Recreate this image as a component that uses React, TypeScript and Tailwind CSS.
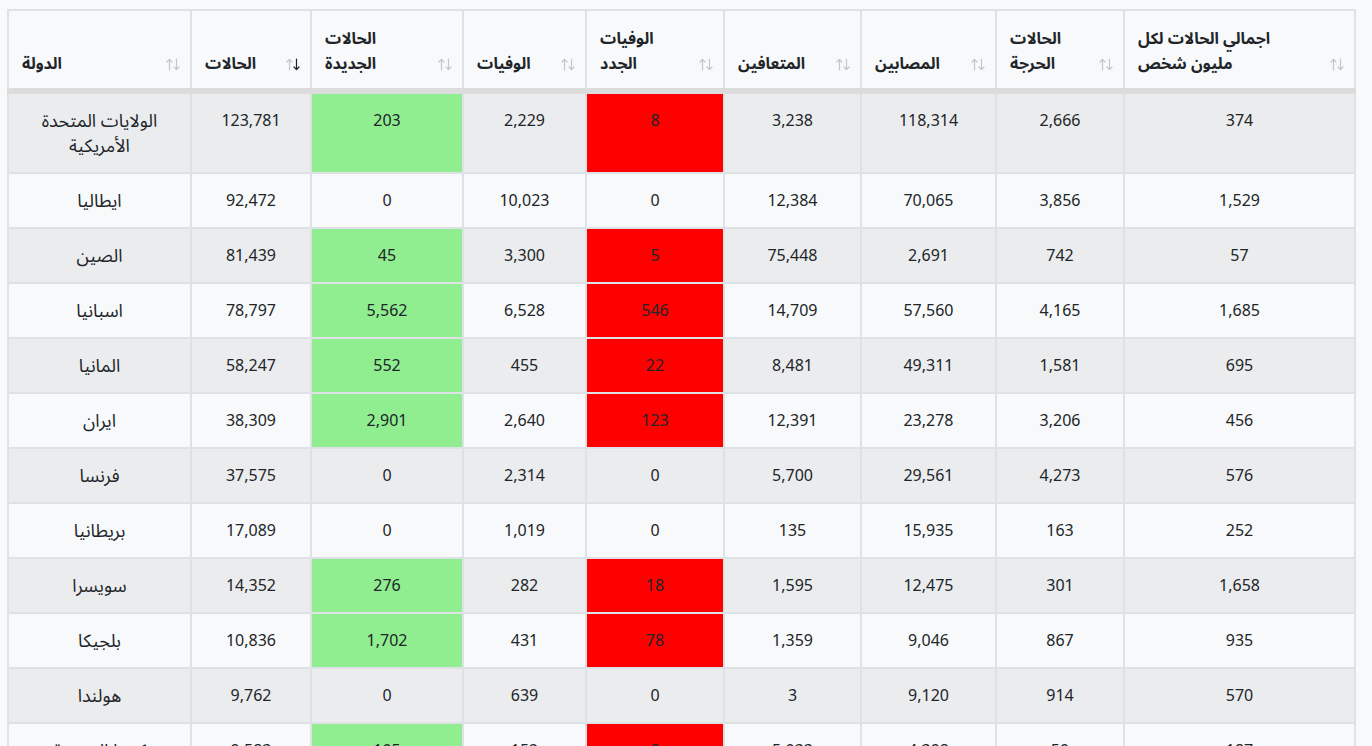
import React from 'react';

type Row = {
  country: string[];
  cases: string;
  newCases: string;
  deaths: string;
  newDeaths: string;
  recovered: string;
  active: string;
  critical: string;
  perMillion: string;
};

const headers: { lines: string[]; sorted?: boolean }[] = [
  { lines: ['الدولة'] },
  { lines: ['الحالات'], sorted: true },
  { lines: ['الحالات', 'الجديدة'] },
  { lines: ['الوفيات'] },
  { lines: ['الوفيات', 'الجدد'] },
  { lines: ['المتعافين'] },
  { lines: ['المصابين'] },
  { lines: ['الحالات', 'الحرجة'] },
  { lines: ['اجمالي الحالات لكل', 'مليون شخص'] },
];

const widths = [183, 120, 152, 123, 138, 137, 135, 128, 231];

const rows: Row[] = [
  { country: ['الولايات المتحدة', 'الأمريكية'], cases: '123,781', newCases: '203', deaths: '2,229', newDeaths: '8', recovered: '3,238', active: '118,314', critical: '2,666', perMillion: '374' },
  { country: ['ايطاليا'], cases: '92,472', newCases: '0', deaths: '10,023', newDeaths: '0', recovered: '12,384', active: '70,065', critical: '3,856', perMillion: '1,529' },
  { country: ['الصين'], cases: '81,439', newCases: '45', deaths: '3,300', newDeaths: '5', recovered: '75,448', active: '2,691', critical: '742', perMillion: '57' },
  { country: ['اسبانيا'], cases: '78,797', newCases: '5,562', deaths: '6,528', newDeaths: '546', recovered: '14,709', active: '57,560', critical: '4,165', perMillion: '1,685' },
  { country: ['المانيا'], cases: '58,247', newCases: '552', deaths: '455', newDeaths: '22', recovered: '8,481', active: '49,311', critical: '1,581', perMillion: '695' },
  { country: ['ايران'], cases: '38,309', newCases: '2,901', deaths: '2,640', newDeaths: '123', recovered: '12,391', active: '23,278', critical: '3,206', perMillion: '456' },
  { country: ['فرنسا'], cases: '37,575', newCases: '0', deaths: '2,314', newDeaths: '0', recovered: '5,700', active: '29,561', critical: '4,273', perMillion: '576' },
  { country: ['بريطانيا'], cases: '17,089', newCases: '0', deaths: '1,019', newDeaths: '0', recovered: '135', active: '15,935', critical: '163', perMillion: '252' },
  { country: ['سويسرا'], cases: '14,352', newCases: '276', deaths: '282', newDeaths: '18', recovered: '1,595', active: '12,475', critical: '301', perMillion: '1,658' },
  { country: ['بلجيكا'], cases: '10,836', newCases: '1,702', deaths: '431', newDeaths: '78', recovered: '1,359', active: '9,046', critical: '867', perMillion: '935' },
  { country: ['هولندا'], cases: '9,762', newCases: '0', deaths: '639', newDeaths: '0', recovered: '3', active: '9,120', critical: '914', perMillion: '570' },
  { country: ['كوريا الجنوبية'], cases: '9,583', newCases: '105', deaths: '152', newDeaths: '8', recovered: '5,033', active: '4,398', critical: '59', perMillion: '187' },
];

function SortIcon({ sorted }: { sorted?: boolean }) {
  const light = '#c3c7cb';
  return (
    <svg width="14" height="13" viewBox="0 0 14 13" fill="none" strokeWidth={1.2} strokeLinecap="round" strokeLinejoin="round">
      <g stroke={light}>
        <path d="M3.5 12V1.5" />
        <path d="M1 4l2.5-2.5L6 4" />
      </g>
      <g stroke={sorted ? '#212529' : light}>
        <path d="M10.5 1v10.5" />
        <path d="M8 9l2.5 2.5L13 9" />
      </g>
    </svg>
  );
}

export default function App() {
  return (
    <div
      className="h-[746px] overflow-hidden bg-[#f8f9fa] pt-[9px] pl-[7px] text-[#212529]"
      style={{ fontFamily: '"Noto Sans", "Noto Sans Arabic", "DejaVu Sans", sans-serif' }}
    >
      <table className="w-[1347px] table-fixed border-collapse text-[16px]">
        <colgroup>
          {widths.map((w, i) => (
            <col key={i} style={{ width: w }} />
          ))}
        </colgroup>
        <thead>
          <tr>
            {headers.map((h, i) => (
              <th
                key={i}
                className="border-2 border-[#dee2e6] border-b-[6px] border-b-[#dcdcdc] bg-[#f8f9fa] pl-[13px] pr-[10px] pt-[15px] pb-[12px] align-bottom text-left font-bold leading-[25px]"
              >
                <div className="flex items-end justify-between">
                  <div>
                    {h.lines.map((l, j) => (
                      <div key={j}>{l}</div>
                    ))}
                  </div>
                  <div className="mb-[5px]">
                    <SortIcon sorted={h.sorted} />
                  </div>
                </div>
              </th>
            ))}
          </tr>
        </thead>
        <tbody>
          {rows.map((r, i) => {
            const stripe = i % 2 === 0 ? 'bg-[#ebecee]' : 'bg-[#f8f9fa]';
            const hasNewCases = r.newCases !== '0';
            const hasNewDeaths = r.newDeaths !== '0';
            const cell = 'border-2 border-[#dee2e6] px-3 py-[14px] align-top text-center leading-[25px]';
            return (
              <tr key={i} className={stripe}>
                <td className={`${cell} text-[18px]`}>
                  {r.country.map((c, j) => (
                    <div key={j}>{c}</div>
                  ))}
                </td>
                <td className={cell}>{r.cases}</td>
                <td className={`${cell} ${hasNewCases ? 'bg-[#90ee90]' : ''}`}>{r.newCases}</td>
                <td className={cell}>{r.deaths}</td>
                <td className={`${cell} ${hasNewDeaths ? 'bg-[#ff0000]' : ''}`}>{r.newDeaths}</td>
                <td className={cell}>{r.recovered}</td>
                <td className={cell}>{r.active}</td>
                <td className={cell}>{r.critical}</td>
                <td className={cell}>{r.perMillion}</td>
              </tr>
            );
          })}
        </tbody>
      </table>
    </div>
  );
}
